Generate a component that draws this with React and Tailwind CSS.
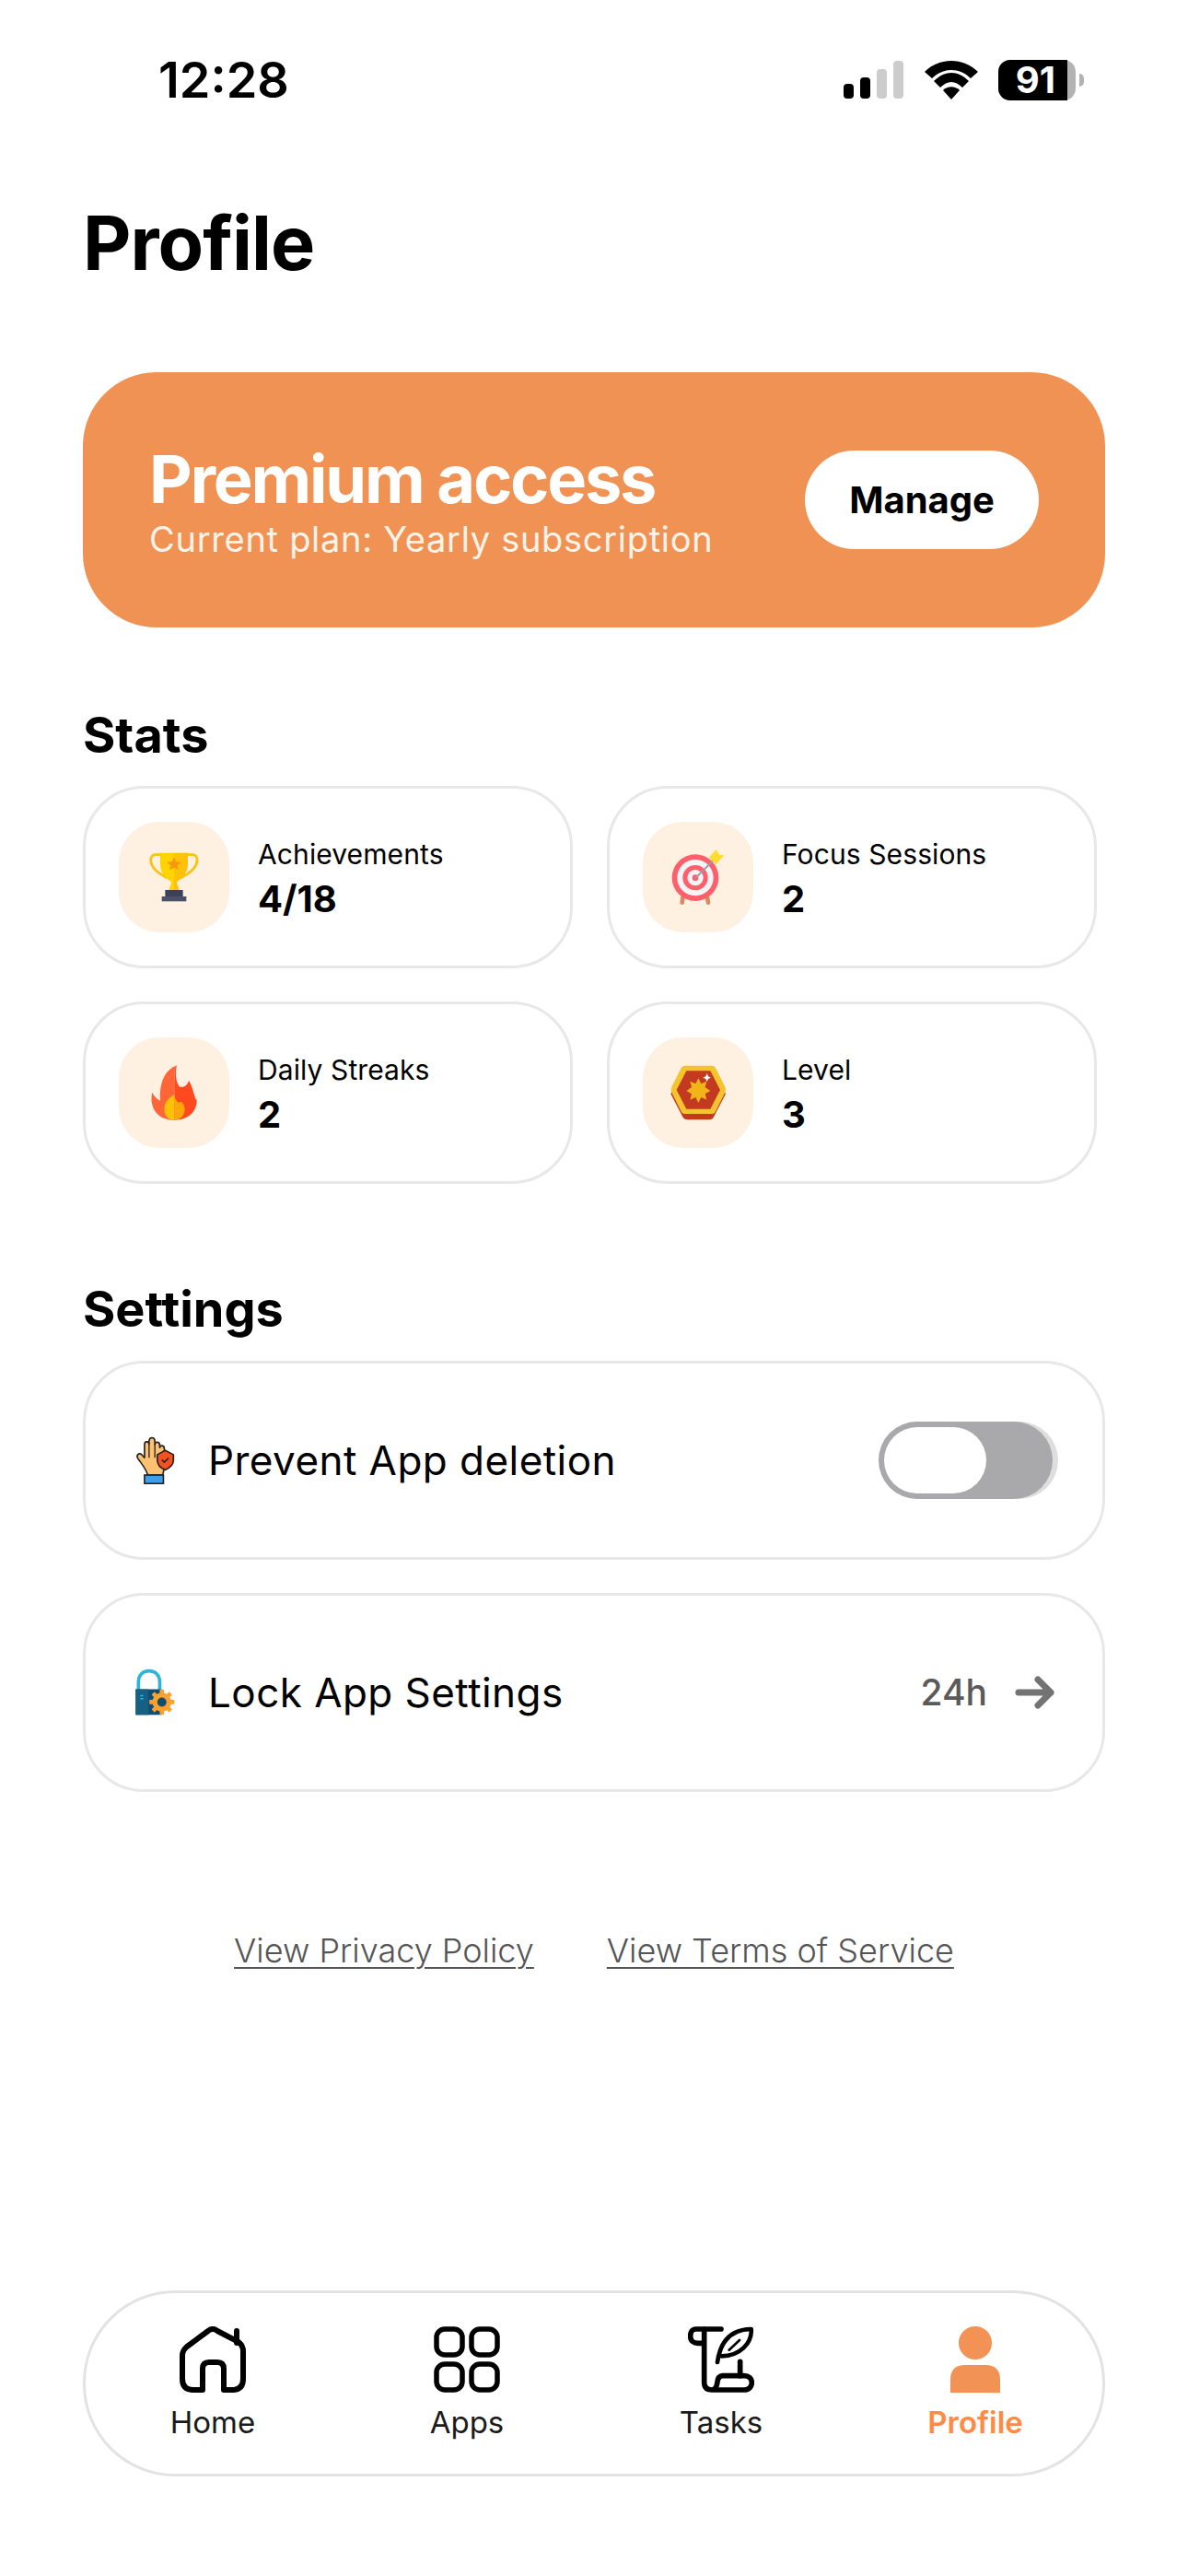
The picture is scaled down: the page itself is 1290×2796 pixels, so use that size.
const font = { fontFamily: 'Inter, "Noto Sans", sans-serif' };

function StatusIcons() {
  return (
    <div className="flex items-center">
      <svg width="66" height="42" viewBox="0 0 66 42" className="mr-[22px]">
        <rect x="0" y="25" width="11" height="16" rx="4" fill="#000" />
        <rect x="18" y="18" width="11" height="23" rx="4" fill="#000" />
        <rect x="36" y="9" width="11" height="32" rx="4" fill="#ccc" />
        <rect x="54" y="0" width="11" height="41" rx="4" fill="#ccc" />
      </svg>
      <svg width="58" height="42" viewBox="0 0 58 42" className="mr-[22px]">
        <path d="M29 42 L20 32 C25 27 33 27 38 32 Z" fill="#000" />
        <path d="M0 12 C16 -4 42 -4 58 12 L50 19 C38 7 20 7 8 19 Z" fill="#000" />
        <path d="M10 22 C22 10 36 10 48 22 L41 29 C33 21 25 21 17 29 Z" fill="#000" />
      </svg>
      <div className="w-[84px] h-[44px] rounded-[13px] bg-[#b3b3b3]">
        <div className="w-[75px] h-[44px] bg-black rounded-l-[13px] flex items-center justify-end pr-[13px] text-white text-[40px] font-bold leading-none">91</div>
      </div>
      <div className="w-[5px] h-[14px] rounded-r-full bg-[#b3b3b3] ml-[4px]" />
    </div>
  );
}

function Trophy() {
  return (
    <svg width="120" height="120" viewBox="87 99 360 360">
      <path d="M228 206 H207 C190 206 187 225 196 242 C206 262 222 268 240 280 M306 206 H326 C343 206 346 225 337 242 C327 262 311 268 293 280" fill="none" stroke="#FDC20E" strokeWidth="8" strokeLinecap="round" />
      <path d="M222 200 H267 V322 H250 C253 310 258 303 258 294 C236 282 222 262 222 235 Z" fill="#FFD400" />
      <path d="M312 200 H267 V322 H284 C281 310 276 303 276 294 C298 282 312 262 312 235 Z" fill="#FFC20A" />
      <path d="M267 213 L274 229 L291 230 L278 241 L282 256 L267 248 L252 256 L256 241 L243 230 L260 229 Z" fill="#F59A0F" />
      <rect x="238" y="321" width="58" height="22" fill="#3B4256" />
      <rect x="227" y="342" width="80" height="16" fill="#4A5166" />
    </svg>
  );
}

function Target() {
  return (
    <svg width="120" height="120" viewBox="84 99 360 360">
      <path d="M214 345 L212 362 M294 345 L297 362" stroke="#D98B60" strokeWidth="14" strokeLinecap="round" />
      <circle cx="255" cy="281" r="76" fill="#FF5F6B" />
      <circle cx="255" cy="281" r="59" fill="#F6F3F6" />
      <circle cx="255" cy="281" r="41" fill="#FF5F6B" />
      <circle cx="255" cy="281" r="26" fill="#F6F3F6" />
      <circle cx="255" cy="281" r="10" fill="#FF5F6B" />
      <path d="M257 281 L312 226" stroke="#9A9BA5" strokeWidth="6" strokeLinecap="round" />
      <path d="M300 215 L323 189 L334 207 L349 208 L322 238 L310 226 Z" fill="#FFDC2E" />
    </svg>
  );
}

function Flame() {
  return (
    <svg width="120" height="120" viewBox="87 801 360 360">
      <path d="M276 892 C240 905 218 945 222 1007 C210 1000 201 992 196 980 C186 1020 205 1070 268 1070 V905 Z" fill="#FF6536" />
      <path d="M276 892 L268 905 V1070 C305 1070 341 1050 341 1005 C332 998 332 970 315 941 C312 955 300 965 285 962 C272 945 270 915 276 892 Z" fill="#FF4A1F" />
      <path d="M268 988 C250 998 235 1012 235 1035 C235 1058 250 1070 268 1070 Z" fill="#FFC107" />
      <path d="M268 988 V1070 C288 1070 302 1055 302 1035 C302 1022 295 1012 288 1010 C285 1018 272 1012 268 988 Z" fill="#FFA50D" />
    </svg>
  );
}

function Hex() {
  return (
    <svg width="120" height="120" viewBox="84 801 360 360">
      <path d="M222 909 H308 L354 985 L315 1060 Q312 1069 300 1069 H230 Q218 1069 214 1060 L175 985 Z" fill="#C2391C" />
      <path d="M222 893 H308 Q318 893 322 902 L352 962 Q356 972 352 980 L322 1040 Q318 1050 308 1050 H222 Q212 1050 208 1040 L178 980 Q174 972 178 962 L208 902 Q212 893 222 893 Z" fill="#F4C430" />
      <path d="M226 910 H304 L336 972 L304 1034 H226 L194 972 Z" fill="#C23A1F" />
      <path d="M265 934 L274 952 L292 944 L287 963 L304 975 L287 985 L292 1004 L274 996 L265 1014 L256 996 L238 1004 L243 985 L226 975 L243 963 L238 944 L256 952 Z" fill="#F2B519" />
      <path d="M293 918 L297 928 L306 932 L297 936 L293 946 L289 936 L280 932 L289 928 Z" fill="#fff" />
    </svg>
  );
}

function Hand() {
  return (
    <svg width="43" height="52" viewBox="80 235 130 157">
      <path d="M120 362 C118 345 100 325 88 307 C82 298 90 288 100 294 L110 305 V262 C110 250 124 250 125 260 V250 C126 236 143 236 144 250 V262 C146 250 160 252 160 264 V272 C162 262 175 264 175 275 V330 C175 345 172 350 170 362 Z" fill="#FDC271" stroke="#222" strokeWidth="5" strokeLinejoin="round" />
      <path d="M125 258 V305 M144 258 V305" stroke="#222" strokeWidth="4" fill="none" />
      <rect x="110" y="362" width="62" height="28" fill="#3F9EE6" stroke="#222" strokeWidth="5" />
      <path d="M178 281 L205 295 V313 C205 330 190 340 178 345 C165 340 152 330 152 313 V295 Z" fill="#F4511E" stroke="#222" strokeWidth="5" strokeLinejoin="round" />
      <path d="M167 312 L175 320 L189 306" stroke="#222" strokeWidth="5" fill="none" />
    </svg>
  );
}

function LockGear() {
  const teeth = [0, 45, 90, 135, 180, 225, 270, 315];
  return (
    <svg width="43" height="52" viewBox="80 995 130 155">
      <path d="M90 1065 V1040 C90 1015 105 1002 125 1002 C145 1002 160 1015 160 1040 V1065" fill="none" stroke="#2DB5D9" strokeWidth="11" />
      <rect x="81" y="1062" width="85" height="84" fill="#0F4E72" />
      <rect x="81" y="1062" width="42" height="84" fill="#165F85" />
      <path d="M96 1083 H106 M96 1093 H106" stroke="#2DB5D9" strokeWidth="4" />
      {teeth.map((a) => (
        <rect key={a} x="160" y="1063" width="14" height="14" rx="2" fill="#FBA12F" transform={`rotate(${a} 167 1104)`} />
      ))}
      <circle cx="167" cy="1104" r="31" fill="#FBA12F" />
      <circle cx="167" cy="1104" r="15" fill="#0F4E72" />
    </svg>
  );
}

function HomeIcon() {
  return (
    <svg width="72" height="72" viewBox="0 0 72 72" fill="none" stroke="#000" strokeWidth="6" strokeLinejoin="round" strokeLinecap="round">
      <path d="M25 69 V46 Q25 39 32 39 H41 Q48 39 48 46 V69 H57 Q69 69 69 57 V27 Q69 21 64 17 L41 5 Q36 1 31 5 L8 22 Q3 26 3 32 V57 Q3 69 15 69 Z" />
      <path d="M62 5 V18" />
    </svg>
  );
}

function AppsIcon() {
  return (
    <svg width="72" height="72" viewBox="0 0 72 72" fill="none" stroke="#000" strokeWidth="5.5">
      <rect x="3" y="3" width="28" height="28" rx="9" />
      <rect x="41" y="3" width="28" height="28" rx="9" />
      <rect x="3" y="41" width="28" height="28" rx="9" />
      <rect x="41" y="41" width="28" height="28" rx="9" />
    </svg>
  );
}

function TasksIcon() {
  return (
    <svg width="72" height="72" viewBox="172 135 216 216" fill="none" stroke="#000" strokeWidth="17" strokeLinecap="round" strokeLinejoin="round">
      <path d="M280 144 H198 C185 144 180 155 180 168 C180 182 190 190 205 190 H222" />
      <path d="M225 145 V318 C225 335 235 342 250 342 H355 C372 342 380 330 380 318 C380 305 370 296 355 296 H285 C270 296 268 310 267 322 C265 334 258 342 250 342" />
      <path d="M342 250 V296" />
      <path d="M268 252 C275 200 300 145 378 144 C382 190 340 232 282 232" strokeWidth="14" />
      <path d="M306 212 L340 180" strokeWidth="8" />
    </svg>
  );
}

function ProfileIcon() {
  return (
    <svg width="54" height="72" viewBox="0 0 54 72" fill="#F29254">
      <circle cx="27" cy="18" r="18" />
      <path d="M0 72 V58 Q0 42 16 42 H38 Q54 42 54 58 V72 Z" />
    </svg>
  );
}

function StatCard({ icon, label, value }) {
  return (
    <div className="h-[198px] rounded-[66px] border-[3px] border-[#e8e8e8] flex items-center pl-[36px]">
      <div className="w-[120px] h-[120px] rounded-[44px] bg-[#FFF1E2] shrink-0">{icon}</div>
      <div className="ml-[31px] pt-[3px] flex flex-col">
        <span className="text-[30px] leading-[38px] tracking-[0.1px] text-black">{label}</span>
        <span className="text-[40px] leading-[48px] font-bold text-black mt-[6px]">{value}</span>
      </div>
    </div>
  );
}

function NavItem({ icon, label, active }) {
  return (
    <div className="flex flex-col items-center">
      <div className="h-[72px] flex items-center justify-center">{icon}</div>
      <span className={active ? "mt-[12px] text-[33px] leading-[40px] font-semibold text-[#FF8A45]" : "mt-[12px] text-[33px] leading-[40px] text-[#1a1a1a]"}>{label}</span>
    </div>
  );
}

export default function App() {
  return (
    <div style={font} className="w-[1290px] h-[2796px] bg-white flex flex-col overflow-hidden">
      <div className="h-[90px] mt-[42px] flex-none flex items-center justify-between pl-[172px] pr-[113px]">
        <span className="text-[54px] leading-none font-semibold text-black">12:28</span>
        <StatusIcons />
      </div>

      <div className="px-[90px] flex flex-col flex-1">
        <h1 className="mt-[84px] text-[81px] leading-[96px] font-bold tracking-[-1px] text-black">Profile</h1>

        <div className="mt-[92px] w-[1110px] h-[277px] rounded-[80px] bg-[#F09254] flex items-center justify-between pl-[72px] pr-[72px]">
          <div className="flex flex-col">
            <span className="text-[72px] leading-[84px] font-bold tracking-[-2.2px] text-white">Premium access</span>
            <span className="text-[38px] leading-[46px] tracking-[0.7px] text-[#FFF3E8]">Current plan: Yearly subscription</span>
          </div>
          <div className="w-[254px] h-[107px] rounded-full bg-white flex items-center justify-center text-[40px] font-bold text-black">Manage</div>
        </div>

        <h2 className="mt-[86px] text-[54px] leading-[62px] font-bold text-black">Stats</h2>
        <div className="mt-[24px] w-[1101px] grid grid-cols-2 gap-x-[37px] gap-y-[36px]">
          <StatCard icon={<Trophy />} label="Achievements" value="4/18" />
          <StatCard icon={<Target />} label="Focus Sessions" value="2" />
          <StatCard icon={<Flame />} label="Daily Streaks" value="2" />
          <StatCard icon={<Hex />} label="Level" value="3" />
        </div>

        <h2 className="mt-[105px] text-[54px] leading-[62px] font-bold text-black">Settings</h2>
        <div className="mt-[25px] flex flex-col gap-[36px]">
          <div className="h-[216px] rounded-[66px] border-[3px] border-[#e8e8e8] flex items-center pl-[54px] pr-[48px]">
            <div className="w-[79px] shrink-0"><Hand /></div>
            <span className="flex-1 text-[44px] font-normal tracking-[0.45px] text-black">Prevent App deletion</span>
            <div className="w-[195px] h-[84px] rounded-full bg-[#dedede]">
              <div className="w-[189px] h-[84px] rounded-full bg-[#a9a9ab] flex items-center pl-[6px]">
                <div className="w-[111px] h-[72px] rounded-full bg-white" />
              </div>
            </div>
          </div>
          <div className="h-[216px] rounded-[66px] border-[3px] border-[#e8e8e8] flex items-center pl-[54px] pr-[51px]">
            <div className="w-[79px] shrink-0"><LockGear /></div>
            <span className="flex-1 text-[44px] font-normal tracking-[0.45px] text-black">Lock App Settings</span>
            <span className="text-[39px] font-medium text-[#5a5a5a]">24h</span>
            <svg width="44" height="36" viewBox="0 0 44 36" className="ml-[30px]" fill="none" stroke="#737373" strokeWidth="7" strokeLinecap="round" strokeLinejoin="round">
              <path d="M4 18 H39 M25 4 L39 18 L25 32" />
            </svg>
          </div>
        </div>

        <div className="mt-[150px] flex justify-center gap-[79px] text-[36px] leading-[44px] font-light text-[#555]">
          <span className="underline underline-offset-[5px] decoration-[2px]">View Privacy Policy</span>
          <span className="underline underline-offset-[5px] decoration-[2px]">View Terms of Service</span>
        </div>

        <div className="mt-auto mb-[108px] h-[202px] rounded-[100px] border-[3px] border-[#e3e3e3] grid grid-cols-4 pt-[36px]">
          <NavItem icon={<HomeIcon />} label="Home" />
          <NavItem icon={<AppsIcon />} label="Apps" />
          <NavItem icon={<TasksIcon />} label="Tasks" />
          <NavItem icon={<ProfileIcon />} label="Profile" active />
        </div>
      </div>
    </div>
  );
}
